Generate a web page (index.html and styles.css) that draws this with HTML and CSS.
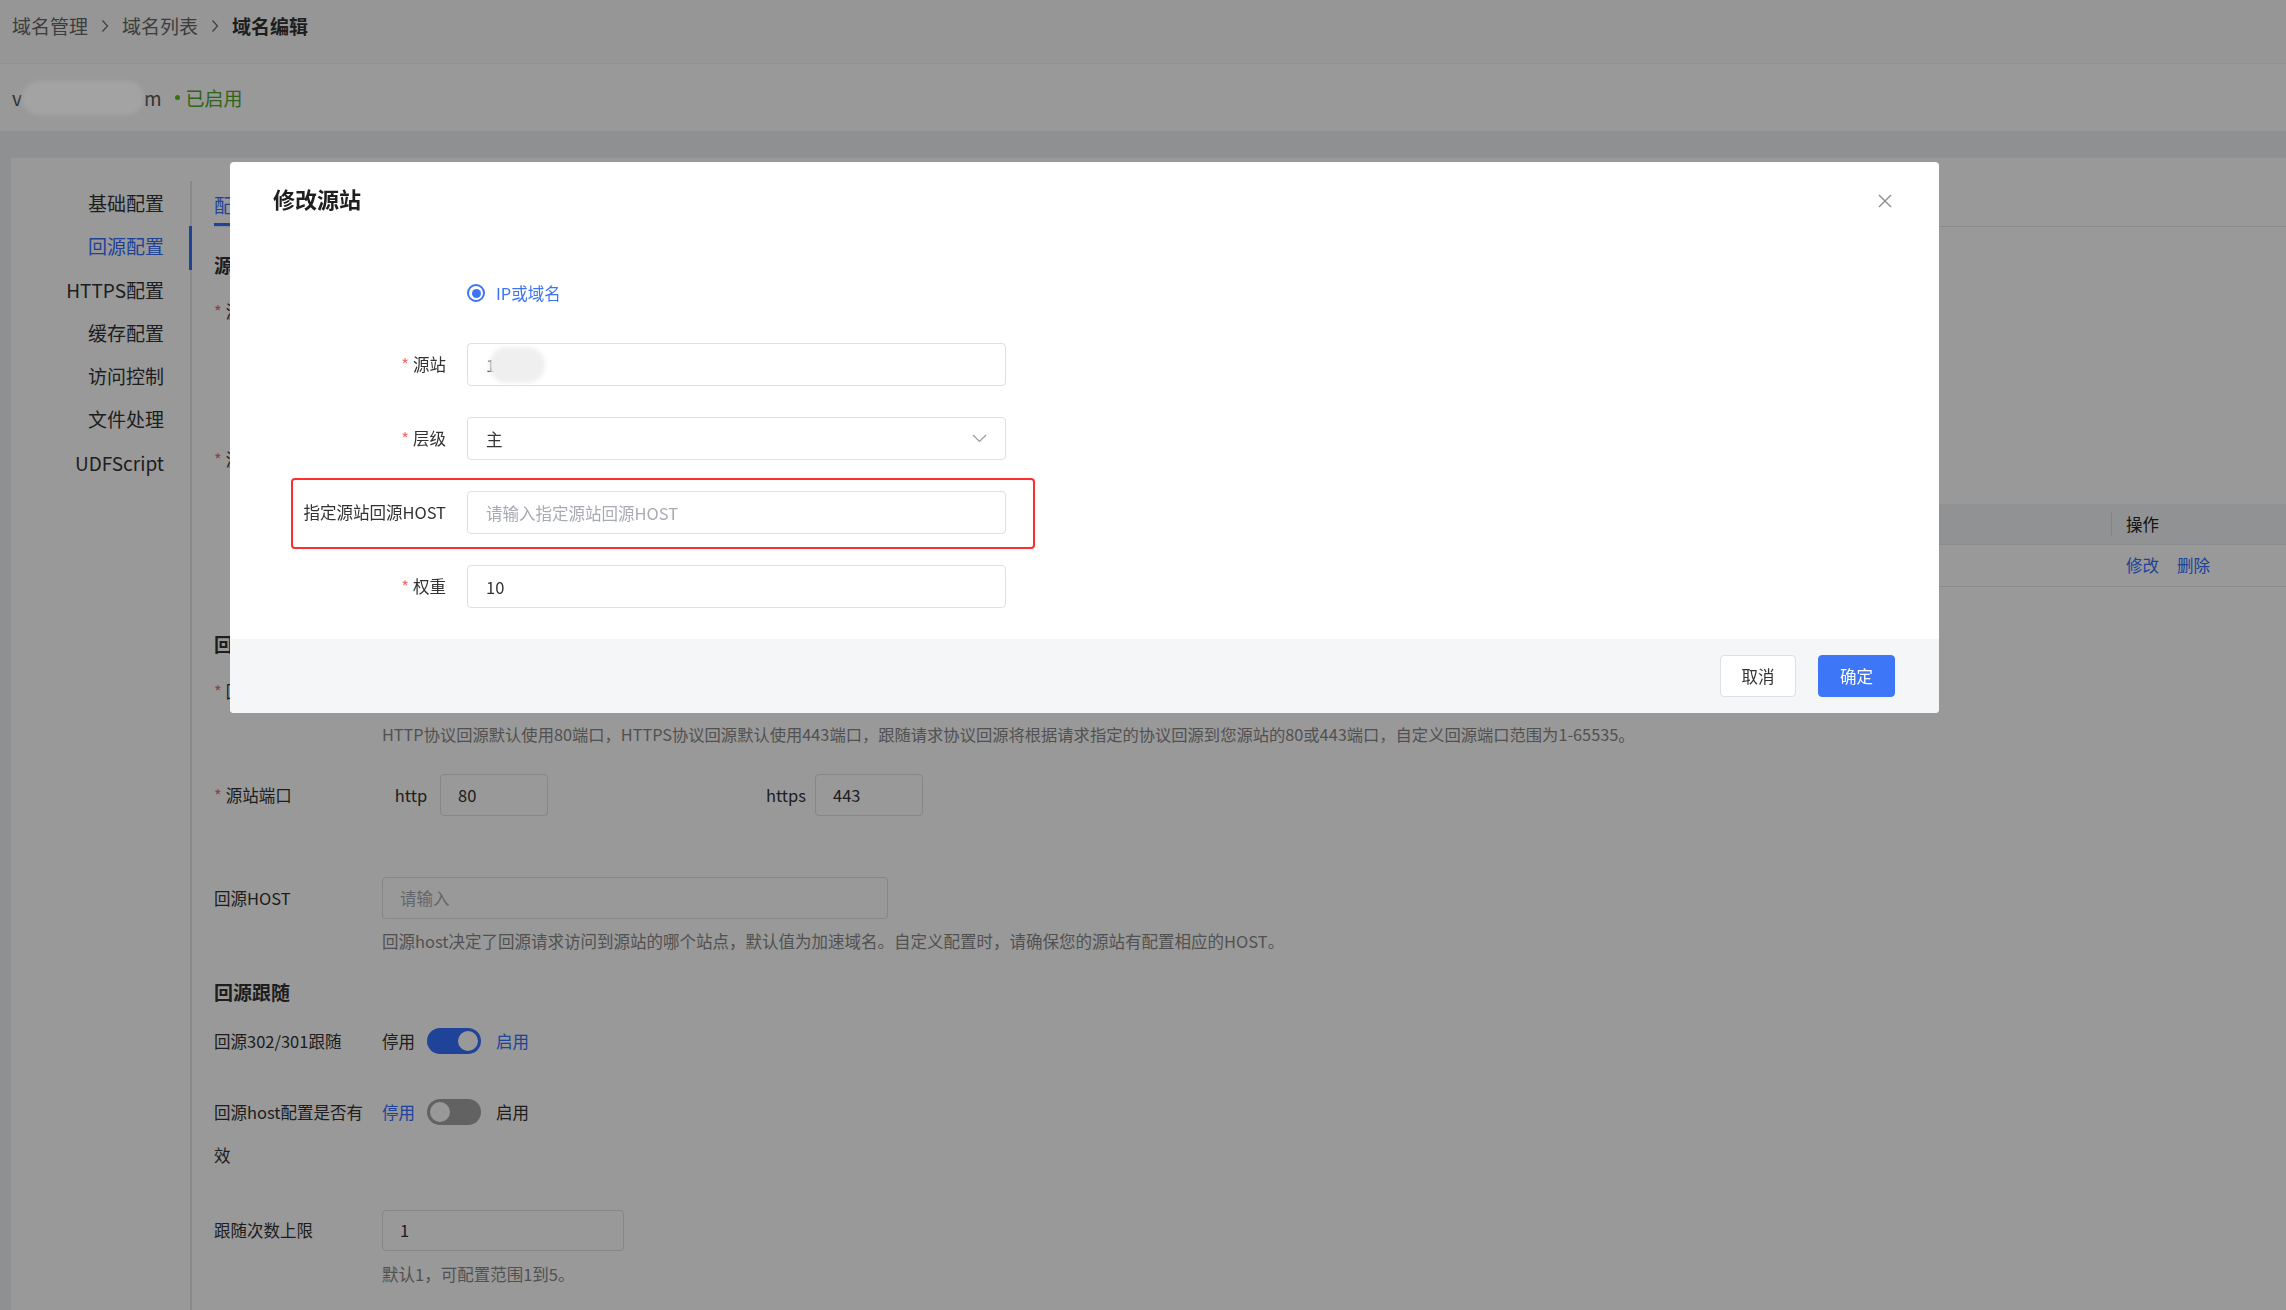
FILE: index.html
```html
<!DOCTYPE html>
<html lang="zh-CN">
<head>
<meta charset="utf-8">
<title>域名编辑</title>
<link rel="stylesheet" href="styles.css">
</head>
<body>
<div class="page">
  <div class="breadcrumb">
    <span class="crumb">域名管理</span>
    <svg class="crumb-sep" width="8" height="14" viewBox="0 0 8 14"><path d="M1.5 1.5l5 5.5-5 5.5" fill="none" stroke="#666" stroke-width="1.2"/></svg>
    <span class="crumb">域名列表</span>
    <svg class="crumb-sep" width="8" height="14" viewBox="0 0 8 14"><path d="M1.5 1.5l5 5.5-5 5.5" fill="none" stroke="#666" stroke-width="1.2"/></svg>
    <span class="crumb crumb-current">域名编辑</span>
  </div>
  <div class="domain-bar">
    <span class="domain">v<span class="redact"></span>m</span>
    <span class="status"><i class="status-dot"></i>已启用</span>
  </div>
  <div class="card">
    <nav class="side-menu">
      <a class="menu-item">基础配置</a>
      <a class="menu-item active">回源配置</a>
      <a class="menu-item">HTTPS配置</a>
      <a class="menu-item">缓存配置</a>
      <a class="menu-item">访问控制</a>
      <a class="menu-item">文件处理</a>
      <a class="menu-item">UDFScript</a>
    </nav>
    <main class="content">
      <div class="tabs"><span class="tab active">配置</span></div>

      <h3 class="section-title first">源站配置</h3>
      <div class="form-row row-type">
        <div class="form-label required">源站类型</div>
        <div class="form-control"></div>
      </div>
      <div class="form-row">
        <div class="form-label required">源站信息</div>
        <div class="form-control">
          <span class="add-btn"></span>
          <table class="origin-table">
            <thead>
              <tr><th></th><th></th><th></th><th></th><th class="col-op">操作</th></tr>
            </thead>
            <tbody>
              <tr><td></td><td></td><td></td><td></td><td class="col-op"><a class="link">修改</a><a class="link">删除</a></td></tr>
            </tbody>
          </table>
        </div>
      </div>

      <h3 class="section-title proto-title">回源协议</h3>
      <div class="form-row proto-row">
        <div class="form-label required">回源协议</div>
        <div class="form-control">
          <div class="line"></div>
          <div class="help help-proto">HTTP协议回源默认使用80端口，HTTPS协议回源默认使用443端口，跟随请求协议回源将根据请求指定的协议回源到您源站的80或443端口，自定义回源端口范围为1-65535。</div>
        </div>
      </div>
      <div class="form-row port-row">
        <div class="form-label required tall">源站端口</div>
        <div class="form-control port-control">
          <span class="port-label">http</span><input class="input port-input" value="80">
          <span class="port-label port-gap">https</span><input class="input port-input" value="443">
        </div>
      </div>
      <div class="form-row host-row">
        <div class="form-label tall">回源HOST</div>
        <div class="form-control">
          <input class="input host-input" placeholder="请输入">
          <div class="help help-host">回源host决定了回源请求访问到源站的哪个站点，默认值为加速域名。自定义配置时，请确保您的源站有配置相应的HOST。</div>
        </div>
      </div>

      <h3 class="section-title follow-title">回源跟随</h3>
      <div class="form-row follow-row">
        <div class="form-label">回源302/301跟随</div>
        <div class="form-control switch-line">
          <span>停用</span><span class="switch on"><i></i></span><span class="active-text">启用</span>
        </div>
      </div>
      <div class="form-row hosteff-row">
        <div class="form-label wrap">回源host配置是否有效</div>
        <div class="form-control switch-line wrap-line">
          <span class="active-text">停用</span><span class="switch"><i></i></span><span>启用</span>
        </div>
      </div>
      <div class="form-row limit-row">
        <div class="form-label limit-label">跟随次数上限</div>
        <div class="form-control">
          <input class="input limit-input" value="1">
          <div class="help help-limit">默认1，可配置范围1到5。</div>
        </div>
      </div>
    </main>
  </div>
</div>

<div class="mask">
  <div class="dialog">
    <div class="dialog-header">
      <span class="dialog-title">修改源站</span>
      <svg class="dialog-close" width="16" height="16" viewBox="0 0 16 16"><path d="M2 2l12 12M14 2L2 14" stroke="#8c8c8c" stroke-width="1.4" fill="none"/></svg>
    </div>
    <div class="dialog-body">
      <div class="m-radio-row">
        <span class="radio"><i></i></span><span class="radio-label">IP或域名</span>
      </div>
      <div class="m-row">
        <div class="m-label required">源站</div>
        <div class="m-input"><span class="m-text">1</span><span class="m-redact"></span></div>
      </div>
      <div class="m-row">
        <div class="m-label required">层级</div>
        <div class="m-input m-select"><span class="m-text">主</span>
          <svg class="chevron" width="15" height="9" viewBox="0 0 15 9"><path d="M1 1l6.5 6.5L14 1" fill="none" stroke="#999" stroke-width="1.2"/></svg>
        </div>
      </div>
      <div class="m-row annotated">
        <div class="m-label">指定源站回源HOST</div>
        <input class="m-input m-field" placeholder="请输入指定源站回源HOST">
      </div>
      <div class="m-row">
        <div class="m-label required">权重</div>
        <input class="m-input m-field" value="10">
      </div>
    </div>
    <div class="dialog-footer">
      <span class="btn">取消</span>
      <span class="btn btn-primary">确定</span>
    </div>
  </div>
</div>
</body>
</html>
```
FILE: styles.css
```css
* { box-sizing: border-box; }
html, body { margin: 0; height: 100%; }
body {
  font-family: "Noto Sans CJK SC", "Microsoft YaHei", "Noto Sans", sans-serif;
  font-size: 16.5px;
  color: #333;
  background: #eef0f3;
  overflow: hidden;
}
a { text-decoration: none; }
input { font: inherit; color: #333; outline: none; }
input::placeholder { color: #a8abb2; }

/* breadcrumb */
.breadcrumb {
  height: 63px;
  background: #fbfbfb;
  padding: 12px 0 0 12px;
  display: flex;
  align-items: flex-start;
  font-size: 19px;
  line-height: 28px;
  color: #666;
}
.crumb-sep { margin: 7px 13px 0; }
.crumb-current { color: #333; font-weight: bold; }

/* domain bar */
.domain-bar {
  height: 68px;
  background: #fff;
  display: flex;
  align-items: center;
  padding-left: 12px;
  font-size: 19px;
  border-top: 1px solid #f4f4f4;
}
.domain { color: #555; display: flex; align-items: center; }
.redact {
  display: inline-block;
  width: 122px;
  height: 34px;
  border-radius: 17px;
  background: #a3a3a3;
  filter: blur(2px);
  position: relative;
  z-index: 2100;
}
.status { margin-left: 13px; color: #4fa82a; display: flex; align-items: center; }
.status-dot { width: 5px; height: 5px; border-radius: 50%; background: #52c41a; margin-right: 6px; }

/* card */
.card {
  margin: 27px 0 0 11px;
  background: #fff;
  display: flex;
  height: calc(100vh - 158px);
}
.side-menu {
  width: 181px;
  flex-shrink: 0;
  margin-top: 23px;
  border-right: 2px solid #e4e4e4;
  padding-right: 26px;
  text-align: right;
  font-size: 19px;
  display: flex;
  flex-direction: column;
}
.menu-item { display: block; height: 43.3px; line-height: 43.3px; color: #333; position: relative; }
.menu-item.active { color: #3370ff; }
.menu-item.active::after {
  content: "";
  position: absolute;
  right: -28px;
  top: 2px;
  width: 3px;
  height: 44px;
  background: #3370ff;
}

.content { flex: 1; padding-left: 22px; min-width: 0; }
.tabs {
  height: 69px;
  border-bottom: 1px solid #e4e7ed;
  display: flex;
  align-items: flex-end;
}
.tab {
  font-size: 19px;
  line-height: 28px;
  padding-bottom: 4px;
  border-bottom: 3px solid #3370ff;
  color: #3370ff;
}

.section-title { font-size: 19px; font-weight: bold; line-height: 28px; margin: 24px 0 0; color: #333; }
.proto-title { margin-top: 43px; }
.follow-title { margin-top: 23px; }

.form-row { display: flex; }
.form-label { width: 168px; flex-shrink: 0; line-height: 28px; padding-right: 12px; color: #333; }
.form-label.tall { line-height: 42px; }
.required::before { content: "*"; color: #f56c6c; margin-right: 4px; }
.form-control { flex: 1; min-width: 0; line-height: 28px; }

.row-type { margin-top: 18px; height: 148px; }
.add-btn {
  display: block;
  width: 110px;
  height: 32px;
}
.origin-table {
  width: 100%;
  margin-top: 27px;
  border-collapse: collapse;
  table-layout: fixed;
}
.origin-table th {
  height: 40px;
  background: #f2f3f5;
  font-weight: normal;
  color: #222;
  text-align: left;
  padding-left: 15px;
  border-bottom: 1px solid #e6e8ee;
  position: relative;
}
.origin-table th + th::before {
  content: "";
  position: absolute;
  left: 0;
  top: 8px;
  width: 1px;
  height: 24px;
  background: #dcdde2;
}
.origin-table td {
  height: 42px;
  padding-left: 15px;
  border-bottom: 1px solid #e6e8ee;
}
.origin-table .col-op { width: 175px; }
.link { color: #3370ff; margin-right: 18px; }

.proto-row { margin-top: 19px; }
.line { height: 28px; }
.help { color: #888; line-height: 28px; white-space: nowrap; }
.help-proto { margin-top: 15px; font-size: 16.3px; }

.input {
  height: 42px;
  border: 1px solid #dcdfe6;
  border-radius: 4px;
  padding: 0 17px;
  background: #fff;
}
.port-row { margin-top: 26px; }
.port-control { display: flex; align-items: center; }
.port-label { width: 58px; text-align: center; }
.port-gap { margin-left: 209px; }
.port-input { width: 108px; }

.host-row { margin-top: 61px; }
.host-input { width: 506px; display: block; }
.help-host { margin-top: 8px; }

.follow-row { margin-top: 21px; }
.switch-line { display: flex; align-items: center; }
.switch {
  width: 54px;
  height: 26px;
  border-radius: 13px;
  background: #a3a3a3;
  margin: 0 15px 0 12px;
  padding: 3px;
  display: flex;
}
.switch i { width: 20px; height: 20px; border-radius: 50%; background: #fff; }
.switch.on { background: #3370ff; justify-content: flex-end; }
.active-text { color: #3370ff; }

.hosteff-row { margin-top: 36px; }
.form-label.wrap { line-height: 43px; }
.wrap-line { height: 43px; align-self: flex-start; }

.limit-row { margin-top: 33px; }
.limit-label { line-height: 41px; }
.limit-input { width: 242px; height: 41px; display: block; }
.help-limit { margin-top: 9px; }

/* modal */
.mask {
  position: fixed;
  inset: 0;
  background: rgba(0, 0, 0, 0.4);
  padding: 162px 0 0 230px;
  z-index: 2000;
}
.dialog {
  width: 1709px;
  height: 551px;
  background: #fff;
  border-radius: 4px;
  display: flex;
  flex-direction: column;
  overflow: hidden;
}
.dialog-header {
  padding: 21px 46px 0 43px;
  display: flex;
  justify-content: space-between;
  align-items: center;
}
.dialog-title { font-size: 22px; font-weight: bold; line-height: 30px; color: #1f1f1f; }
.dialog-close { margin-top: 6px; }
.dialog-body { flex: 1; padding: 66px 0 0 62px; }
.m-radio-row { display: flex; align-items: center; height: 28px; padding-left: 175px; }
.radio {
  width: 18px;
  height: 18px;
  border-radius: 50%;
  border: 2px solid #3d74f5;
  display: flex;
  align-items: center;
  justify-content: center;
}
.radio i { width: 9px; height: 9px; border-radius: 50%; background: #3d74f5; }
.radio-label { margin-left: 11px; color: #3d74f5; }

.m-row { display: flex; height: 43px; margin-top: 31px; width: 714px; position: relative; }
.m-radio-row + .m-row { margin-top: 36px; }
.m-label { width: 154px; margin-right: 21px; text-align: right; line-height: 43px; color: #333; }
.m-input {
  width: 539px;
  height: 43px;
  border: 1px solid #dcdfe6;
  border-radius: 4px;
  padding: 0 18px;
  display: flex;
  align-items: center;
  background: #fff;
}
.m-text { color: #333; }
.m-redact {
  display: inline-block;
  width: 56px;
  height: 36px;
  border-radius: 18px;
  background: #efefef;
  filter: blur(2px);
  margin-left: -6px;
}
.m-select { justify-content: space-between; padding-right: 18px; }
.m-row.annotated::after {
  content: "";
  position: absolute;
  left: -1px;
  right: -29px;
  top: -13px;
  bottom: -15px;
  border: 2px solid #ff2d2d;
  border-radius: 4px;
}

.dialog-footer {
  height: 74px;
  background: #f5f6f8;
  display: flex;
  justify-content: flex-end;
  align-items: center;
  gap: 22px;
  padding-right: 44px;
}
.btn {
  width: 76px;
  height: 42px;
  border: 1px solid #dcdfe6;
  border-radius: 4px;
  background: #fff;
  color: #333;
  display: flex;
  align-items: center;
  justify-content: center;
}
.btn-primary { width: 77px; background: #3d76f6; border-color: #3d76f6; color: #fff; }
```
